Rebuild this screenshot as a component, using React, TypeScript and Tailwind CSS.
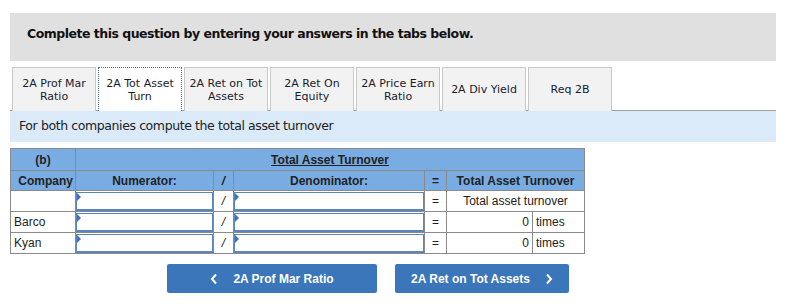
import React from 'react';

const verdana = { fontFamily: '"DejaVu Sans", Verdana, sans-serif' };

const tabs = [
  ['2A Prof Mar', 'Ratio'],
  ['2A Tot Asset', 'Turn'],
  ['2A Ret on Tot', 'Assets'],
  ['2A Ret On', 'Equity'],
  ['2A Price Earn', 'Ratio'],
  ['2A Div Yield'],
  ['Req 2B'],
];

function Tab({ lines, active }: { lines: string[]; active?: boolean }) {
  return (
    <div
      className={
        'w-[84px] h-[44px] flex flex-col items-center justify-center text-[11px] leading-[13px] text-[#1a1a2e] ' +
        (active
          ? 'bg-white border border-dotted border-[#4a6f9c] border-b-0 relative z-10'
          : 'bg-[#f2f2f2] border border-[#c8c8c8] border-b-0 h-[43px]')
      }
    >
      {lines.map((l) => (
        <span key={l}>{l}</span>
      ))}
    </div>
  );
}

function Entry() {
  return (
    <div className="relative h-[19px] border border-b-2 border-[#5a86c0] bg-white">
      <span className="absolute left-0 top-0 w-0 h-0 border-t-[4px] border-b-[4px] border-l-[4px] border-t-transparent border-b-transparent border-l-[#3b73c0]" />
    </div>
  );
}

const cell = 'border border-[#8a8a8a] p-0';

export default function App() {
  return (
    <div className="w-[808px] h-[304px] bg-white pt-[13px]" style={verdana}>
      <div className="ml-[10px] w-[766px] h-[48px] bg-[#e0e0e0] px-[17px] pt-[12px]">
        <p className="text-[12.5px] tracking-[-0.5px] font-bold text-[#111]">
          Complete this question by entering your answers in the tabs below.
        </p>
      </div>

      <div className="ml-[10px] w-[766px] mt-[6px]">
        <div className="flex gap-[2px] pl-[2px] items-start border-b border-[#a0a0a0] h-[44px]">
          {tabs.map((t, i) => (
            <Tab key={i} lines={t} active={i === 1} />
          ))}
        </div>
        <div className="h-[31px] bg-[#dbeaf8] pl-[9px] flex items-center text-[12.5px] tracking-[-0.4px] text-[#222]">
          For both companies compute the total asset turnover
        </div>
      </div>

      <div className="ml-[10px] mt-[6px]" style={{ fontFamily: '"Liberation Sans", Arial, sans-serif' }}>
        <table className="border-collapse text-[12px] text-[#222] table-fixed w-[574px]">
          <colgroup>
            <col className="w-[65px]" />
            <col className="w-[138px]" />
            <col className="w-[20px]" />
            <col className="w-[191px]" />
            <col className="w-[22px]" />
            <col className="w-[86px]" />
            <col className="w-[52px]" />
          </colgroup>
          <tbody>
            <tr className="h-[22px] bg-[#79ace3] font-bold">
              <td className={cell + ' text-center'}>(b)</td>
              <td className={cell + ' text-center underline'} colSpan={6}>
                Total Asset Turnover
              </td>
            </tr>
            <tr className="h-[20px] bg-[#79ace3] font-bold">
              <td className={cell + ' text-right pr-[2px]'}>Company</td>
              <td className={cell + ' text-center'}>Numerator:</td>
              <td className={cell + ' text-center italic'}>/</td>
              <td className={cell + ' text-center'}>Denominator:</td>
              <td className={cell + ' text-center'}>=</td>
              <td className={cell + ' text-center'} colSpan={2}>
                Total Asset Turnover
              </td>
            </tr>
            <tr className="h-[21px]">
              <td className={cell}></td>
              <td className={cell}><Entry /></td>
              <td className={cell + ' text-center italic'}>/</td>
              <td className={cell}><Entry /></td>
              <td className={cell + ' text-center'}>=</td>
              <td className={cell + ' text-center'} colSpan={2}>
                Total asset turnover
              </td>
            </tr>
            {['Barco', 'Kyan'].map((n) => (
              <tr key={n} className="h-[21px]">
                <td className={cell + ' px-[3px]'}>{n}</td>
                <td className={cell}><Entry /></td>
                <td className={cell + ' text-center italic'}>/</td>
                <td className={cell}><Entry /></td>
                <td className={cell + ' text-center'}>=</td>
                <td className={cell + ' text-right pr-[3px]'}>0</td>
                <td className={cell + ' px-[3px]'}>times</td>
              </tr>
            ))}
          </tbody>
        </table>

        <div className="flex gap-[18px] ml-[157px] mt-[10px] text-[12px] font-bold text-white">
          <button className="w-[210px] h-[29px] rounded-[2px] bg-[#3a76b9] flex items-center justify-center gap-[15px]">
            <svg width="8" height="12" viewBox="0 0 8 12" fill="none" stroke="white" strokeWidth="2">
              <path d="M6 1.5L2 6l4 4.5" />
            </svg>
            <span>2A Prof Mar Ratio</span>
          </button>
          <button className="w-[174px] h-[29px] rounded-[2px] bg-[#3a76b9] flex items-center justify-center gap-[15px]">
            <span>2A Ret on Tot Assets</span>
            <svg width="8" height="12" viewBox="0 0 8 12" fill="none" stroke="white" strokeWidth="2">
              <path d="M2 1.5L6 6l-4 4.5" />
            </svg>
          </button>
        </div>
      </div>
    </div>
  );
}
